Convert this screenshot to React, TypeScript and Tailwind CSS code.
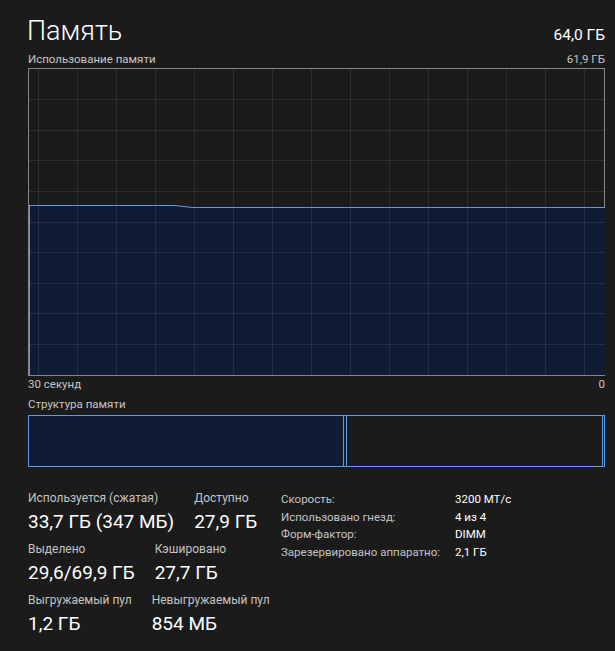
import React from "react";

const LINE = "#5a9ae8";
const FILL = "#0f1c33";

// Grid: vertical lines every ~39px (scrolled), horizontal lines at 10 divisions.
function UsageGraph() {
  const w = 576;
  const h = 306;
  const vx: number[] = [];
  for (let k = 0; ; k++) {
    const x = Math.floor(9 + 39.07 * k) + 0.5;
    if (x >= w) break;
    vx.push(x);
  }
  const hy: number[] = [];
  for (let k = 1; k < 10; k++) hy.push(Math.floor(30.6 * k) + 0.5);

  const pts = [
    [0, 136.5],
    [146, 136.5],
    [163, 138.5],
    [w, 138.5],
  ];
  const line = pts.map((p) => p.join(",")).join(" ");
  const area = `0,${h} ${line} ${w},${h}`;

  return (
    <svg width={w} height={h} viewBox={`0 0 ${w} ${h}`} className="block">
      <polygon points={area} fill={FILL} />
      {vx.map((x) => (
        <line key={`v${x}`} x1={x} y1={0} x2={x} y2={h} stroke="rgba(255,255,255,0.085)" strokeWidth={1} />
      ))}
      {hy.map((y) => (
        <line key={`h${y}`} x1={0} y1={y} x2={w} y2={y} stroke="rgba(255,255,255,0.085)" strokeWidth={1} />
      ))}
      <polyline points={line} fill="none" stroke={LINE} strokeWidth={1.2} />
      <line x1={0.5} y1={136.5} x2={0.5} y2={h} stroke={LINE} strokeWidth={1} />
    </svg>
  );
}

function Stat({ label, value }: { label: string; value: string }) {
  return (
    <div className="flex flex-col">
      <div className="text-[12px] leading-[17px] text-[#c4c4c4] whitespace-nowrap">{label}</div>
      <div className="mt-[2px] text-[19px] leading-[26px] text-white whitespace-nowrap">{value}</div>
    </div>
  );
}

const details: [string, string][] = [
  ["Скорость:", "3200 МТ/с"],
  ["Использовано гнезд:", "4 из 4"],
  ["Форм-фактор:", "DIMM"],
  ["Зарезервировано аппаратно:", "2,1 ГБ"],
];

export default function App() {
  return (
    <div className="w-[615px] h-[651px] overflow-hidden bg-[#1b1b1b] pl-[28px] pr-[10px] font-['Roboto','Noto_Sans',sans-serif] text-white">
      {/* Header */}
      <div className="flex items-baseline justify-between pt-[14px] h-[51px]">
        <div className="text-[27px] leading-[34px] font-light -ml-[1px]">Память</div>
        <div className="text-[15.5px] leading-[20px]">64,0 ГБ</div>
      </div>
      <div className="flex justify-between h-[17px] text-[11.5px] leading-[16px] text-[#c6c6c6]">
        <span>Использование памяти</span>
        <span>61,9 ГБ</span>
      </div>

      {/* Usage graph */}
      <div className="h-[308px] border border-[#878787]">
        <UsageGraph />
      </div>
      <div className="flex justify-between h-[16px] text-[11.5px] leading-[16px] text-[#c6c6c6]">
        <span>30 секунд</span>
        <span>0</span>
      </div>

      {/* Memory composition */}
      <div className="mt-[4px] h-[16px] text-[11.5px] leading-[16px] text-[#c6c6c6]">Структура памяти</div>
      <div className="mt-[3px] flex h-[52px]">
        <div className="w-[317px] border border-[#5a9ae8] bg-[#0f1c33]" />
        <div className="w-[2px] border-y border-[#5a9ae8] bg-[#131c2b]" />
        <div className="w-[257px] border border-[#5a9ae8]" />
        <div className="w-[2px] border-y border-r border-[#5a9ae8]" />
      </div>

      {/* Stats */}
      <div className="mt-[23px] flex">
        <div className="w-[253px] flex flex-col gap-[6px]">
          <div className="flex gap-[20px]">
            <Stat label="Используется (сжатая)" value="33,7 ГБ (347 МБ)" />
            <Stat label="Доступно" value="27,9 ГБ" />
          </div>
          <div className="flex gap-[20px]">
            <Stat label="Выделено" value="29,6/69,9 ГБ" />
            <Stat label="Кэшировано" value="27,7 ГБ" />
          </div>
          <div className="flex gap-[20px]">
            <Stat label="Выгружаемый пул" value="1,2 ГБ" />
            <Stat label="Невыгружаемый пул" value="854 МБ" />
          </div>
        </div>
        <div className="flex flex-col text-[11.5px] leading-[17.7px] pt-[1px]">
          {details.map(([k, v]) => (
            <div key={k} className="flex">
              <span className="w-[174px] text-[#c4c4c4] whitespace-nowrap">{k}</span>
              <span className="text-white whitespace-nowrap">{v}</span>
            </div>
          ))}
        </div>
      </div>
    </div>
  );
}
